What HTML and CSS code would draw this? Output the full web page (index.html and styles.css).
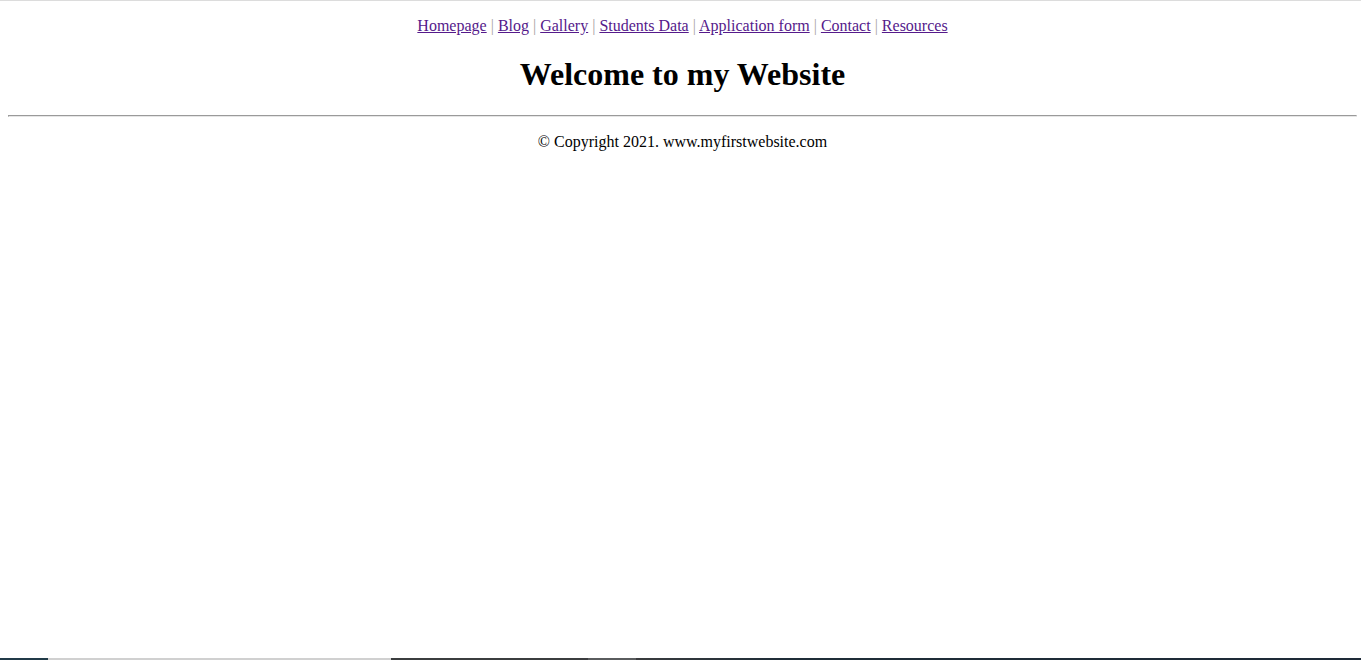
FILE: index.html
```html
<!DOCTYPE html>
<html>
<head>
<meta charset="utf-8">
<title>My First Website</title>
<link rel="stylesheet" href="styles.css">
</head>
<body>
<p class="nav">
<a href="#">Homepage</a> <span class="sep">|</span> <a href="#">Blog</a> <span class="sep">|</span> <a href="#">Gallery</a> <span class="sep">|</span> <a href="#">Students Data</a> <span class="sep">|</span> <a href="#">Application form</a> <span class="sep">|</span> <a href="#">Contact</a> <span class="sep">|</span> <a href="#">Resources</a>
</p>
<h1 class="title">Welcome to my Website</h1>
<hr class="rule">
<p class="footer">&copy; Copyright 2021. www.myfirstwebsite.com</p>
<div class="taskbar">
  <span class="seg seg-a"></span>
  <span class="seg seg-b"></span>
  <span class="seg seg-c"></span>
  <span class="seg seg-d"></span>
  <span class="seg seg-e"></span>
</div>
</body>
</html>
```
FILE: styles.css
```css
html {
  border-top: 1px solid #dcdcdc;
  background: #fff;
}
body {
  margin: 0;
  padding: 8px 4px 8px 8px;
  font-family: "Liberation Serif", "Times New Roman", serif;
  font-size: 16px;
  color: #000;
}
.nav {
  text-align: center;
  margin: 8px 0 16px;
}
.nav a {
  color: #551a8b;
}
.sep {
  color: #a8a2a0;
}
.title {
  text-align: center;
  font-size: 32px;
  margin: 21.44px 0;
}
.rule {
  margin: 8px 0;
  height: 0;
  border-style: solid;
  border-width: 1px;
  border-color: #9a9a9a #e6e6e6 #e6e6e6 #9a9a9a;
}
.footer {
  text-align: center;
  margin: 16px 0;
}
.taskbar {
  position: fixed;
  left: 0;
  right: 0;
  bottom: 0;
  height: 2px;
  display: flex;
}
.seg { display: block; height: 100%; }
.seg-a { width: 48px; background: #213a48; }
.seg-b { width: 343px; background: #d0d0d0; }
.seg-c { width: 197px; background: #3b3d3f; }
.seg-d { width: 48px; background: #5a5c5e; }
.seg-e { flex: 1; background: linear-gradient(to right, #3a3c3e, #1f2d38 20%, #1e2a38); }
```
